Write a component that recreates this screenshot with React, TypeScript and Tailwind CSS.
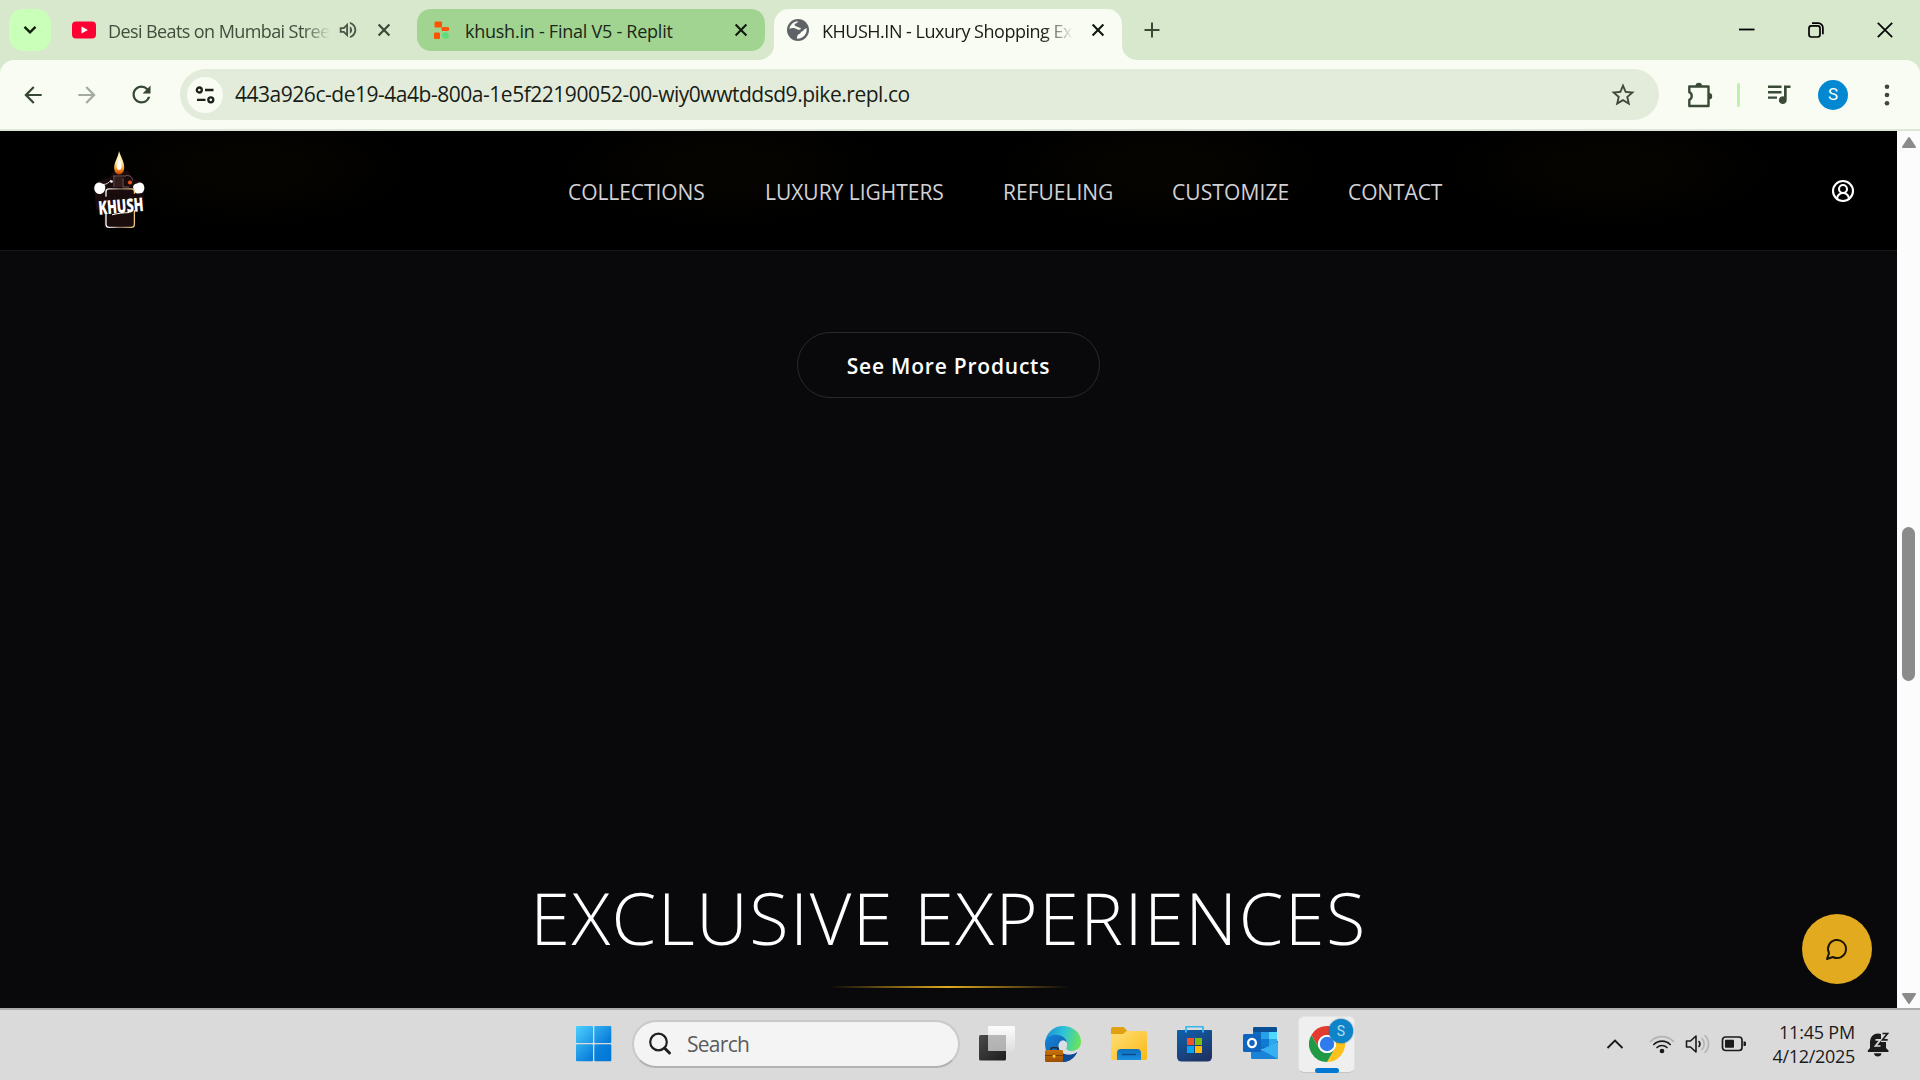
import React from "react";
import { MdArrowBack, MdArrowForward, MdRefresh, MdStarBorder, MdOutlineVolumeUp } from "react-icons/md";
import { CircleUserRound } from "lucide-react";

const CloseX = ({ className }: { className: string }) => (
  <svg width="14" height="14" viewBox="0 0 14 14" className={className}>
    <path d="M1.6 1.6l10.8 10.8M12.4 1.6L1.6 12.4" stroke="currentColor" strokeWidth="2.1" fill="none" />
  </svg>
);

const YouTube = () => (
  <svg width="24" height="24" viewBox="0 0 24 24">
    <rect x="0" y="3.5" width="24" height="17" rx="4" fill="#ff0033" />
    <path d="M9.5 8.4v7.2l6.4-3.6z" fill="#fff" />
  </svg>
);

const Replit = () => (
  <svg width="24" height="24" viewBox="0 0 24 24">
    <rect x="5.5" y="3.5" width="7.5" height="6" rx="1.2" fill="#fd5402" />
    <rect x="12.5" y="9" width="7.5" height="4" rx="1.2" fill="#fd5402" />
    <rect x="5" y="14.5" width="6" height="6.5" rx="1.2" fill="#fd5402" />
    <circle cx="16.5" cy="17.5" r="3.3" fill="#5fdc7c" />
  </svg>
);

const Globe = () => (
  <svg width="24" height="24" viewBox="0 0 24 24">
    <circle cx="12" cy="12" r="11" fill="#5f6368" />
    <path
      d="M12 3.200c-.3 1.600-1.600 2.300-3.200 2.600-.6 1.300.3 2.300 1.700 2.600 2.200.4 2.500 1.500 4.300 1.600.2 1.400-1.100 1.900-2.600 1.800-1.800-.2-2.500-1.700-4.600-1.700-1.500 0-3.200.3-4.300.8a9 9 0 0 1 8.700-7.700z"
      fill="#f8fcf2"
    />
    <path
      d="M20.600 10.200c-1.400.1-2.300.9-3 2.100-.8 1.300-2.400.9-2.900 2.500-.4 1.400-2.300 1-2.800 2.300-.4 1.200-1.300 1.500-.9 3.500a9 9 0 0 0 9.600-10.400z"
      fill="#f8fcf2"
    />
  </svg>
);

function TabStrip() {
  return (
    <div className="flex h-[60px] bg-[#d7e8cd] pl-[9px] pt-[9px] text-[18px] leading-[42px]">
      <div className="flex h-[42px] w-[42px] items-center justify-center rounded-[14px] bg-[#c9ffb8]">
        <svg width="14" height="10" viewBox="0 0 14 10">
          <path d="M1.5 1.8L7 7.3l5.5-5.5" stroke="#0f1f0a" strokeWidth="2.4" fill="none" />
        </svg>
      </div>

      <div className="ml-[9px] flex h-[42px] w-[348px] items-center pl-3 text-[#424d3e]">
        <YouTube />
        <span className="ml-[12px] w-[222px] overflow-hidden whitespace-nowrap pt-0.5 tracking-[-0.592px] [mask-image:linear-gradient(to_right,black_88%,transparent)]">
          Desi Beats on Mumbai Stree
        </span>
        <MdOutlineVolumeUp className="ml-[7px]" size={22} color="#4c5647" />
        <CloseX className="ml-[18px] text-[#3a4535]" />
      </div>

      <div className="ml-[9px] flex h-[42px] w-[348px] items-center rounded-[14px] bg-[#a1d491] pl-3 text-[#1b2718]">
        <Replit />
        <span className="ml-[12px] w-[239px] overflow-hidden whitespace-nowrap pt-0.5 tracking-[-0.25px]">
          khush.in - Final V5 - Replit
        </span>
        <CloseX className="ml-[30px] text-[#11190e]" />
      </div>

      <div className="relative ml-[9px] h-[51px] w-[348px] rounded-t-[15px] bg-[#f8fcf2] text-[#181d17]">
        <div className="flex h-[42px] items-center pl-3">
          <Globe />
          <span className="ml-[12px] w-[251px] overflow-hidden whitespace-nowrap pt-0.5 tracking-[-0.491px] [mask-image:linear-gradient(to_right,black_88%,transparent)]">
            KHUSH.IN - Luxury Shopping Ex
          </span>
          <CloseX className="ml-[18px] text-[#11190e]" />
        </div>
        <svg width="15" height="15" className="absolute -left-[15px] bottom-0">
          <path d="M15 0v15H0A15 15 0 0 0 15 0z" fill="#f8fcf2" />
        </svg>
        <svg width="15" height="15" className="absolute -right-[15px] bottom-0">
          <path d="M0 0v15h15A15 15 0 0 1 0 0z" fill="#f8fcf2" />
        </svg>
      </div>

      <svg width="16" height="16" viewBox="0 0 16 16" className="ml-[22px] mt-[13px]">
        <path d="M8 .5v15M.5 8h15" stroke="#3a4b35" strokeWidth="2" />
      </svg>

      <div className="ml-auto mr-[27px] mt-[12px] flex h-[18px] items-center">
        <svg width="16" height="16" viewBox="0 0 16 16">
          <path d="M0 7.500h15.500" stroke="#000" strokeWidth="1.8" />
        </svg>
        <svg width="16" height="16" viewBox="0 0 16 16" className="ml-[53px]" fill="none" stroke="#000" strokeWidth="1.7">
          <rect x="1" y="3.8" width="11" height="11.2" rx="2.4" />
          <path d="M4 1.2h6.2A4.6 4.6 0 0 1 14.9 6v6.3" />
        </svg>
        <svg width="16" height="16" viewBox="0 0 16 16" className="ml-[53px]">
          <path d="M.8.8l14.4 14.4M15.2.8L.8 15.2" stroke="#000" strokeWidth="1.7" />
        </svg>
      </div>
    </div>
  );
}

function Toolbar() {
  return (
    <div className="h-[71px] bg-[#d7e8cd]">
      <div className="flex h-[71px] items-center rounded-t-[14px] border-b-2 border-[#e0e5d9] bg-[#f8fcf2] pb-0 pl-[21px]">
        <MdArrowBack size={26} color="#374733" className="-ml-px" />
        <MdArrowForward size={26} color="#a3aa9e" className="ml-[28px]" />
        <MdRefresh size={27} color="#374733" className="ml-[28px]" />
        <div className="ml-[25px] flex h-[51px] w-[1479px] items-center rounded-full bg-[#e3ecdb] pl-[7px]">
          <div className="flex h-9 w-9 items-center justify-center rounded-full bg-[#f8fcf2]">
            <svg width="20" height="18" viewBox="0 0 20 18" fill="none" stroke="#1b2118" strokeWidth="2.300">
              <circle cx="4.300" cy="4" r="2.5" />
              <path d="M10 4h8.500M2 13.800h8.500" />
              <circle cx="15.800" cy="13.8" r="2.5" />
            </svg>
          </div>
          <span className="ml-[12px] whitespace-nowrap pb-px text-[21px] leading-[42px] tracking-[-0.475px] text-[#181d17]">
            443a926c-de19-4a4b-800a-1e5f22190052-00-wiy0wwtddsd9.pike.repl.co
          </span>
          <MdStarBorder size={28} color="#3f4a3b" className="ml-auto mr-[22px]" />
        </div>
        <svg width="26" height="28" viewBox="0 0 26 28" className="ml-[28px]">
          <path
            d="M2.300 5.500h19.200v19.500H2.300v-6.200a4.200 4.200 0 0 0 0-7.600z"
            fill="none" stroke="#3b4a37" strokeWidth="2.400" strokeLinejoin="round"
          />
          <path d="M8.600 5a3.200 3.200 0 0 1 6.400 0zM22 12a3.200 3.200 0 0 1 0 6.400z" fill="#3b4a37" />
        </svg>
        <div className="ml-[24px] h-6 w-[3px] rounded-full bg-[#bdf2a8]" />
        <svg width="24" height="22" viewBox="0 0 24 22" className="ml-[27px]" fill="#3b4a37">
          <path d="M1 1.5h13.5v2.4H1zM1 7h13.5v2.4H1zM1 12.4h9v2.4H1zM17 1.5h6.5V4h-3.8v12.2a3.9 3.9 0 1 1-2.7-3.7z" />
        </svg>
        <div className="ml-[27px] flex h-[30px] w-[30px] items-center justify-center rounded-full bg-[#0288d1] font-['Roboto',sans-serif] text-[17px] leading-none text-white">
          S
        </div>
        <svg width="6" height="24" viewBox="0 0 6 24" className="ml-[36px]" fill="#3b4a37">
          <circle cx="3" cy="3.8" r="2.3" />
          <circle cx="3" cy="12" r="2.3" />
          <circle cx="3" cy="20.2" r="2.3" />
        </svg>
      </div>
    </div>
  );
}

const KhushLogo = () => (
  <svg width="60" height="84" viewBox="0 0 60 84" className="mt-[3px]">
    <defs>
      <linearGradient id="flame" x1="0" y1="0" x2="0" y2="1">
        <stop offset="0" stopColor="#fff6d0" />
        <stop offset=".5" stopColor="#ffe9a0" />
        <stop offset=".75" stopColor="#ff9a1f" />
        <stop offset="1" stopColor="#c23c05" />
      </linearGradient>
      <linearGradient id="case" x1="0" x2="1">
        <stop offset="0" stopColor="#ffffff" />
        <stop offset=".5" stopColor="#8a7468" />
        <stop offset="1" stopColor="#e9c87d" />
      </linearGradient>
    </defs>
    <path d="M10 31l11-4 4-6h14l5 8 10 4 1 12-3 13-6 5v15H15V63l-8-4-1-14-2-8z" fill="#1a0b0d" />
    <path d="M30 1C31.800 7 35.200 11.500 35.200 17.500c0 4.200-2.200 6.900-5 6.900s-5-2.700-5-6.700C25.200 12 29 8 30 1z" fill="url(#flame)" />
    <path d="M30.200 6.500c1 4.500 2.400 7.500 2.400 10.400 0 1.800-1 2.900-2.400 2.900s-2.500-1.100-2.500-2.900c0-3.300 1.900-6 2.500-10.400z" fill="#fff" />
    <path d="M24 26h13M37 25.500c5 0 6.500 2 6.500 5M25 26v11M34 28v9h6" fill="none" stroke="#6f5a58" strokeWidth="1" />
    <path d="M26 27h7v10h-7z" fill="#351c1c" />
    <path d="M14 34.500c4 0 6-2 8-4.500" fill="none" stroke="#d9cfcf" strokeWidth="1" />
    <circle cx="22.500" cy="31.500" r="1.300" fill="#fff" />
    <circle cx="41" cy="32.500" r="2.100" fill="#e85317" />
    <path d="M6.300 34.500a4.500 4.500 0 0 1 6.700-1c2.300.2 3.800 2.200 3.200 5-.4 3.300-2.700 5.800-6 5.500-4-.3-6.400-5-3.900-9.500z" fill="#fff" />
    <path d="M54.500 34.500a4.500 4.500 0 0 0-6.500-1c-2.800.2-4.300 2.200-3.700 5 .4 3.300 2.700 5.800 6 5.500 4-.3 6.500-5 4.200-9.500z" fill="#fff" />
    <rect x="17" y="38.800" width="28.400" height="38.500" rx="3" fill="#1a0b0d" stroke="url(#case)" strokeWidth="1.300" />
    <path d="M8 47.500l46-4.500v16l-44 6z" fill="#1a0b0d" />
    <text
      x="9.500" y="63" textLength="45" lengthAdjust="spacingAndGlyphs" transform="rotate(-5 31 58)"
      fill="#fff" fontFamily="Open Sans, sans-serif" fontWeight="800" fontSize="19"
    >
      KHUSH
    </text>
    <path d="M23 64.800c6-1.500 11-2 17-2.200" stroke="#fff" strokeWidth="1" fill="none" />
  </svg>
);

function SiteNav() {
  return (
    <nav className="flex h-[120px] shrink-0 items-center border-b border-[#161617] bg-black bg-[radial-gradient(ellipse_170px_60px_at_250px_38px,#050400_30%,transparent),radial-gradient(ellipse_170px_60px_at_725px_38px,#050400_30%,transparent),radial-gradient(ellipse_170px_60px_at_1160px_38px,#050400_30%,transparent),radial-gradient(ellipse_170px_60px_at_1610px_38px,#050400_30%,transparent)] pl-[89px]">
      <KhushLogo />
      <div className="ml-[419px] flex pt-[3px] text-[21px] leading-[30px] text-[#d1d1d6]">
        <a className="w-[197px] whitespace-nowrap tracking-[-0.06px]">COLLECTIONS</a>
        <a className="w-[238px] whitespace-nowrap tracking-[-0.02px]">LUXURY LIGHTERS</a>
        <a className="w-[169px] whitespace-nowrap">REFUELING</a>
        <a className="w-[176px] whitespace-nowrap tracking-[0.1px]">CUSTOMIZE</a>
        <a className="whitespace-nowrap tracking-[-0.1px]">CONTACT</a>
      </div>
      <CircleUserRound size={24} strokeWidth={2.1} color="#fff" className="ml-auto mr-[42px]" />
    </nav>
  );
}

function Page() {
  return (
    <div className="flex h-[877px]">
      <main className="relative flex w-[1897px] flex-col items-center overflow-hidden bg-[#09090b]">
        <div className="w-full">
          <SiteNav />
        </div>
        <button className="mt-[81px] h-[66px] w-[303px] shrink-0 rounded-full border border-[#29292b] pt-[3px] text-[21px] font-[650] tracking-[0.78px] text-white">
          See More Products
        </button>
        <h2 className="mt-[483px] whitespace-nowrap text-[72px] font-light leading-[72px] tracking-[1.460px] text-white">
          EXCLUSIVE EXPERIENCES
        </h2>
        <div className="mt-[33px] h-[2px] w-[240px] shrink-0 bg-gradient-to-r from-transparent via-[#e2aa1e] to-transparent" />
        <button className="absolute right-[25px] top-[783px] flex h-[70px] w-[70px] items-center justify-center rounded-full bg-[#e2aa1e]">
          <svg width="24" height="24" viewBox="0 0 24 24" fill="none" stroke="#1c1405" strokeWidth="2" strokeLinecap="round" strokeLinejoin="round">
            <path d="M7.900 20A9 9 0 1 0 4 16.100L2 22Z" />
          </svg>
        </button>
      </main>
      <div className="flex w-[23px] flex-col items-center bg-[#fcfcfc]">
        <svg width="16" height="13" viewBox="0 0 16 13" className="mt-[5px]">
          <path d="M8 2l6 9H2z" fill="#8b8b8b" stroke="#8b8b8b" strokeWidth="2" strokeLinejoin="round" />
        </svg>
        <div className="mt-[378px] h-[154px] w-[13px] rounded-full bg-[#8b8b8b]" />
        <svg width="16" height="13" viewBox="0 0 16 13" className="mt-[311px]">
          <path d="M8 11L2 2h12z" fill="#8b8b8b" stroke="#8b8b8b" strokeWidth="2" strokeLinejoin="round" />
        </svg>
      </div>
    </div>
  );
}

const StartIcon = () => (
  <svg width="36" height="36" viewBox="0 0 36 36">
    <defs>
      <linearGradient id="win" x1="0" y1="0" x2="1" y2="1">
        <stop offset="0" stopColor="#4cd0ff" />
        <stop offset=".65" stopColor="#0a7fdb" />
        <stop offset="1" stopColor="#0074d4" />
      </linearGradient>
      <clipPath id="panes">
        <rect x="0" y="0" width="17" height="17" rx="1" />
        <rect x="18.300" y="0" width="17" height="17" rx="1" />
        <rect x="0" y="18.300" width="17" height="17" rx="1" />
        <rect x="18.300" y="18.300" width="17" height="17" rx="1" />
      </clipPath>
    </defs>
    <rect width="36" height="36" fill="url(#win)" clipPath="url(#panes)" />
  </svg>
);

const TaskViewIcon = () => (
  <svg width="36" height="36" viewBox="0 0 36 36">
    <defs>
      <linearGradient id="tvd" x1="0" y1="0" x2="1" y2="1">
        <stop offset="0" stopColor="#4a4a4a" />
        <stop offset="1" stopColor="#1d1d1d" />
      </linearGradient>
      <linearGradient id="tvl" x1="0" y1="0" x2="0" y2="1">
        <stop offset="0" stopColor="#ffffff" stopOpacity=".95" />
        <stop offset="1" stopColor="#e0e0e0" stopOpacity=".85" />
      </linearGradient>
    </defs>
    <rect x="0" y="9" width="27" height="25.500" rx="1.500" fill="url(#tvd)" />
    <rect x="9" y="0" width="27" height="25" rx="1.500" fill="url(#tvl)" />
    <path d="M9 9h18v16H10.500A1.500 1.500 0 0 1 9 23.500z" fill="#a9a9a9" fillOpacity=".75" />
  </svg>
);

const EdgeIcon = () => (
  <svg width="36" height="36" viewBox="0 0 36 36">
    <defs>
      <linearGradient id="eg" x1="0" y1=".3" x2="1" y2=".5">
        <stop offset="0" stopColor="#1a8fd6" />
        <stop offset=".5" stopColor="#2fc4d8" />
        <stop offset="1" stopColor="#6be35a" />
      </linearGradient>
      <linearGradient id="eb" x1="0" y1="0" x2="1" y2="1">
        <stop offset="0" stopColor="#1683d8" />
        <stop offset="1" stopColor="#0c4f9c" />
      </linearGradient>
      <linearGradient id="ec" x1="0" y1="0" x2="0" y2="1">
        <stop offset="0" stopColor="#c9720a" />
        <stop offset="1" stopColor="#9c4f00" />
      </linearGradient>
    </defs>
    <path d="M0 18A18 18 0 0 1 18 0c10 0 18 7 18 15.500 0 6-4 9.500-9 9.500-4.500 0-6.500-1.800-5.700-3.500 1.600-2.700.7-6-2.300-7.500C13 9 4 11 0 18z" fill="url(#eg)" />
    <path d="M0 18c0-6 6-10 12-9.200 6 .7 9.500 4.200 9.700 7.700-3-3.500-8.200-1.500-8.200 3.500 0 4 3 8 8.500 8.400 4 .3 7-.6 10-2.400C29 32 24 36 18 36 8 36 0 28 0 18z" fill="url(#eb)" />
    <path d="M13.500 21c.5 4.500 4 7.200 9 7.400 4 .2 7.300-.9 9.800-2.300C29.500 32.500 24 36 18 36c-4-2-7-8-4.500-15z" fill="#0b4a94" />
    <path d="M14 19.500c0-4 3-6 6-4.500 2.200 1.300 2.700 4.400 1.300 6.700-.9 1.800 1.200 3.400 5.200 3.500 2.500 0 4.500-.5 6-1.500-.2 2-1 2.600-2 3.200-2.500 1.200-5 1.700-8 1.500-5-.3-8.500-4-8.500-8.900z" fill="#dcdfe2" />
    <path d="M6 24.500v-1.300c0-1 .5-1.500 1.500-1.500h4c1 0 1.500.5 1.500 1.500v1.300" fill="none" stroke="#2b2622" strokeWidth="1.500" />
    <rect x="0" y="24" width="18" height="12" rx="1.200" fill="url(#ec)" />
    <path d="M0 29.500h18" stroke="#7d3f00" strokeWidth="1" />
    <rect x="7.800" y="29" width="2.600" height="2.600" fill="#ffd428" />
  </svg>
);

const FolderIcon = () => (
  <svg width="36" height="36" viewBox="0 0 36 36">
    <defs>
      <linearGradient id="fo" x1="0" y1="0" x2="1" y2="1">
        <stop offset="0" stopColor="#ffe07a" />
        <stop offset="1" stopColor="#fcb813" />
      </linearGradient>
      <linearGradient id="fb" x1="0" y1="0" x2="0" y2="1">
        <stop offset="0" stopColor="#0e6dbd" />
        <stop offset="1" stopColor="#1b90e0" />
      </linearGradient>
    </defs>
    <path d="M0 3a2 2 0 0 1 2-2h9.500c.8 0 1.300.3 1.800.8L16 4.500V10H0z" fill="#e0a010" />
    <path d="M0 8h12l3.500-3H34a2 2 0 0 1 2 2v25a2 2 0 0 1-2 2H2a2 2 0 0 1-2-2z" fill="url(#fo)" />
    <path d="M6 34v-7a4 4 0 0 1 4-4h16a4 4 0 0 1 4 4v7z" fill="url(#fb)" />
    <path d="M11 28.500h14" stroke="#0b4c8c" strokeWidth="1.500" />
  </svg>
);

const StoreIcon = () => (
  <svg width="36" height="36" viewBox="0 0 36 36">
    <defs>
      <linearGradient id="st" x1="0" y1="0" x2=".6" y2="1">
        <stop offset="0" stopColor="#0f62b0" />
        <stop offset="1" stopColor="#1d3566" />
      </linearGradient>
    </defs>
    <path d="M9 6V1.500a.8.800 0 0 1 .8-.8h15.400a.8.800 0 0 1 .8.800V6" fill="none" stroke="#38b6ee" strokeWidth="1.800" />
    <path d="M0 5a1 1 0 0 1 1-1h33a1 1 0 0 1 1 1v26a4.500 4.500 0 0 1-4.500 4.500h-26A4.500 4.500 0 0 1 0 31z" fill="url(#st)" />
    <path d="M9 4v2.500M26 4v2.500" stroke="#38b6ee" strokeWidth="1.800" />
    <rect x="10" y="12" width="7" height="7" fill="#f35325" />
    <rect x="18" y="12" width="7" height="7" fill="#81bc06" />
    <rect x="10" y="20" width="7" height="7" fill="#05a6f0" />
    <rect x="18" y="20" width="7" height="7" fill="#ffba08" />
  </svg>
);

const OutlookIcon = () => (
  <svg width="36" height="36" viewBox="0 0 36 36">
    <rect x="10" y="1" width="24" height="22" rx="1.500" fill="#0f6cbd" />
    <rect x="10" y="1" width="24" height="5" rx="1.500" fill="#0a4f94" />
    <rect x="18" y="6" width="8" height="7" fill="#28a0e8" />
    <rect x="26" y="6" width="8" height="7" fill="#50d9ff" />
    <rect x="18" y="13" width="8" height="8" fill="#0f7bd0" />
    <rect x="26" y="13" width="8" height="8" fill="#28a8ea" />
    <path d="M8 18l13 7 14-9v15.500a1.500 1.500 0 0 1-1.500 1.500H9.500A1.500 1.500 0 0 1 8 31.500z" fill="#1883d7" />
    <path d="M35 16v15.500c0 .5-.2 1-.5 1.200L18 23.500z" fill="#35b1f2" />
    <path d="M35 16l-1-1.500v2.100z" fill="#123b6d" />
    <rect x="0" y="8" width="18" height="18" rx="1.500" fill="#0f65be" />
    <ellipse cx="9" cy="17" rx="3.900" ry="4.200" fill="none" stroke="#fff" strokeWidth="2.300" />
  </svg>
);

const ChromeIcon = () => (
  <svg width="36" height="36" viewBox="0 0 36 36">
    <circle cx="18" cy="18" r="18" fill="#fff" />
    <path d="M18 9H33.600A18 18 0 0 0 2.400 9l7.800 13.500A9 9 0 0 1 18 9z" fill="#e33b2e" />
    <path d="M25.800 22.500L18 36A18 18 0 0 0 33.600 9H18a9 9 0 0 1 7.800 13.500z" fill="#fcc21b" />
    <path d="M10.200 22.500L2.400 9A18 18 0 0 0 18 36l7.800-13.500a9 9 0 0 1-15.600 0z" fill="#219a45" />
    <circle cx="18" cy="18" r="9" fill="#fff" />
    <circle cx="18" cy="18" r="7.200" fill="#2f7bee" />
  </svg>
);

const TrayIcons = () => (
  <div className="flex items-center">
    <svg width="18" height="12" viewBox="0 0 18 12">
      <path d="M1.500 10L9 2.500l7.500 7.500" fill="none" stroke="#1b1b1b" strokeWidth="1.900" />
    </svg>
    <svg width="26" height="22" viewBox="0 0 26 22" className="ml-[25px]" fill="none" stroke="#1b1b1b" strokeWidth="1.700" strokeLinecap="round">
      <path d="M1.500 8.500a16 16 0 0 1 23 0" stroke="#b3b3b3" />
      <path d="M4.800 11.500a11.500 11.500 0 0 1 16.400 0M8 14.500a7.200 7.200 0 0 1 10 0" />
      <circle cx="13" cy="18" r="1.500" fill="#1b1b1b" />
    </svg>
    <svg width="26" height="22" viewBox="0 0 26 22" className="ml-[10px]" fill="none" stroke="#1b1b1b" strokeWidth="1.600" strokeLinecap="round" strokeLinejoin="round">
      <path d="M1.500 8h4L11 3v16l-5.500-5h-4zM14 8.500a4 4 0 0 1 0 5" />
      <path d="M17 5.500a8 8 0 0 1 0 11M20 2.500a12 12 0 0 1 0 17" stroke="#b3b3b3" />
    </svg>
    <svg width="26" height="18" viewBox="0 0 26 18" className="ml-[10px]">
      <rect x="1.500" y="2" width="19.500" height="13.500" rx="3" fill="none" stroke="#1b1b1b" strokeWidth="1.700" />
      <rect x="4" y="4.800" width="9" height="8" rx=".8" fill="#1b1b1b" />
      <path d="M22.500 6.500h1.200a1.300 1.300 0 0 1 1.300 1.300v2a1.300 1.300 0 0 1-1.300 1.300h-1.200z" fill="#1b1b1b" />
    </svg>
  </div>
);

function Taskbar() {
  return (
    <div className="flex h-[72px] items-center border-t-2 border-[#acacac] bg-[#dadada] pb-[2px] pl-[576px]">
      <StartIcon />
      <div className="ml-[20px] flex h-[48px] w-[328px] items-center rounded-full border-2 border-[#c9c9c9] border-b-[#b2b2b2] bg-[#f4f4f4] pl-[14px]">
        <svg width="24" height="24" viewBox="0 0 24 24" fill="none" stroke="#1f1f1f">
          <circle cx="10.500" cy="10" r="8.300" strokeWidth="2.200" />
          <path d="M16.500 16l5 5" strokeWidth="3" strokeLinecap="round" />
        </svg>
        <span className="ml-[15px] text-[21px] leading-[30px] tracking-[-0.724px] text-[#5c5c5c]">Search</span>
      </div>
      <div className="ml-[19px] flex items-center gap-[30px]">
        <TaskViewIcon />
        <EdgeIcon />
        <FolderIcon />
        <StoreIcon />
        <OutlookIcon />
      </div>
      <div className="relative ml-[19px] h-[57px] w-[57px] rounded-[6px] border border-[#e3e3e3] border-b-[#c6c6c6] bg-[#efefef] pl-[10px] pt-[9px]">
        <ChromeIcon />
        <div className="absolute right-[1px] top-[2px] flex h-6 w-6 items-center justify-center rounded-full bg-[#0b84c9] font-['Roboto',sans-serif] text-[14px] leading-none text-[#b5daf0] shadow-[0_0_2px_#1b5f90]">
          S
        </div>
        <div className="absolute bottom-[-1px] left-[16px] h-[5px] w-6 rounded-full bg-[#0078d4]" />
      </div>
      <div className="ml-auto flex items-center pr-[29px]">
        <TrayIcons />
        <div className="ml-[24px] flex w-[84px] flex-col items-end whitespace-nowrap pb-px text-[18px] leading-[24px] text-[#1b1b1b]">
          <span className="tracking-[-0.2px]">11:45 PM</span>
          <span className="tracking-[-0.3px]">4/12/2025</span>
        </div>
        <svg width="24" height="26" viewBox="0 0 24 26" className="ml-[12px]">
          <path d="M3 17V10.500a8 8 0 0 1 8-8c5 0 8 4 8 8V17l2.500 2.500V21H.8v-1.500z" fill="#1b1b1b" />
          <path d="M7 22.300h7.500a3.800 3.800 0 0 1-7.500 0z" fill="#1b1b1b" />
          <path d="M8.500 8.800h5l-5 6.200h5" fill="none" stroke="#dadada" strokeWidth="1.700" />
          <rect x="14" y="0" width="10" height="11" fill="#dadada" />
          <path d="M15.500 2.500h5l-5 6.300h5.200" fill="none" stroke="#1b1b1b" strokeWidth="1.700" />
        </svg>
      </div>
    </div>
  );
}

export default function App() {
  return (
    <div className="h-[1080px] w-[1920px] overflow-hidden bg-[#09090b] font-['Open_Sans',sans-serif]">
      <TabStrip />
      <Toolbar />
      <Page />
      <Taskbar />
    </div>
  );
}
